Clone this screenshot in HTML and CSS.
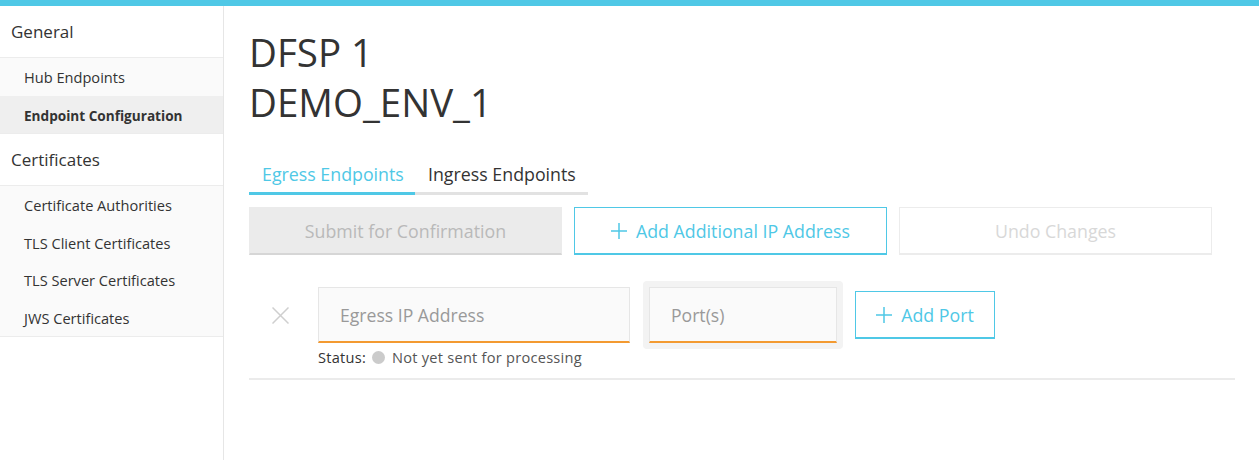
FILE: index.html
```html
<!DOCTYPE html>
<html lang="en">
<head>
<meta charset="utf-8">
<title>Endpoint Configuration</title>
<link rel="stylesheet" href="styles.css">
</head>
<body>
<div class="app">
  <aside class="sidebar">
    <div class="section-title">General</div>
    <ul class="menu">
      <li class="menu-item">Hub Endpoints</li>
      <li class="menu-item active">Endpoint Configuration</li>
    </ul>
    <div class="section-title">Certificates</div>
    <ul class="menu">
      <li class="menu-item">Certificate Authorities</li>
      <li class="menu-item">TLS Client Certificates</li>
      <li class="menu-item">TLS Server Certificates</li>
      <li class="menu-item">JWS Certificates</li>
    </ul>
  </aside>
  <main class="main">
    <h1 class="title">DFSP 1</h1>
    <h1 class="title">DEMO_ENV_1</h1>
    <div class="tabs">
      <div class="tab selected">Egress Endpoints</div>
      <div class="tab">Ingress Endpoints</div>
    </div>
    <div class="actions">
      <button class="btn btn-disabled">Submit for Confirmation</button>
      <button class="btn btn-outline"><svg class="plus" viewBox="0 0 16 16" width="16" height="16"><path d="M8 0V16M0 8H16" stroke="currentColor" stroke-width="1.5" fill="none"/></svg>Add Additional IP Address</button>
      <button class="btn btn-ghost">Undo Changes</button>
    </div>
    <div class="entry">
      <div class="entry-row">
        <div class="remove"><svg viewBox="0 0 17 17" width="17" height="17"><path d="M0.5 0.5L16.5 16.5M16.5 0.5L0.5 16.5" stroke="#cfcfcf" stroke-width="1.5" fill="none"/></svg></div>
        <div class="input ip-input">Egress IP Address</div>
        <div class="port-wrap"><div class="input port-input">Port(s)</div></div>
        <button class="btn btn-outline btn-port"><svg class="plus" viewBox="0 0 16 16" width="16" height="16"><path d="M8 0V16M0 8H16" stroke="currentColor" stroke-width="1.5" fill="none"/></svg>Add Port</button>
      </div>
      <div class="status"><span class="status-label">Status:</span><span class="dot"></span><span>Not yet sent for processing</span></div>
    </div>
  </main>
</div>
</body>
</html>
```
FILE: styles.css
```css
* { box-sizing: border-box; }
html, body { margin: 0; padding: 0; }
body {
  font-family: "Open Sans", "Noto Sans", sans-serif;
  color: #333;
  background: #fff;
  height: 460px;
  overflow: hidden;
}
.app {
  display: flex;
  border-top: 6px solid #4fc8e6;
  height: 460px;
}
.sidebar {
  width: 224px;
  flex: none;
  border-right: 1px solid #e6e6e6;
}
.section-title {
  font-size: 17px;
  height: 52px;
  line-height: 51px;
  padding-left: 11px;
  border-bottom: 1px solid #ececec;
}
.menu {
  list-style: none;
  margin: 0;
  padding: 0;
  background: #fafafa;
  border-bottom: 1px solid #ececec;
}
.menu-item {
  font-size: 14.6px;
  height: 37.5px;
  line-height: 35.5px;
  padding: 2px 0 0 24px;
}
.menu-item.active {
  background: #efefef;
  font-weight: 700;
  font-size: 13.6px;
}
.main {
  flex: 1;
  padding: 0 24px 0 25px;
}
.title {
  font-size: 38.5px;
  font-weight: 400;
  line-height: 50px;
  margin: 0;
}
.title:first-child { margin-top: 21px; }
.tabs {
  display: flex;
  margin-top: 29px;
  width: 339px;
  border-bottom: 3px solid #e2e2e2;
}
.tab {
  font-size: 17.8px;
  line-height: 24px;
  padding: 6px 0 6px 13px;
  width: 166px;
  margin-bottom: -3px;
  border-bottom: 3px solid transparent;
  white-space: nowrap;
}
.tab + .tab { width: 173px; }
.tab.selected {
  color: #4fc8e6;
  border-bottom-color: #4fc8e6;
}
.actions {
  display: flex;
  gap: 12px;
  margin-top: 12px;
}
.btn {
  font-family: inherit;
  font-size: 17.8px;
  height: 48px;
  width: 313px;
  background: #fff;
  border: 1px solid transparent;
  border-bottom-width: 2px;
  display: flex;
  align-items: center;
  justify-content: center;
  gap: 9px;
  padding: 0;
}
.btn-disabled {
  background: #ebebeb;
  color: #b9b9b9;
  border-color: #ebebeb;
  border-bottom-color: #d6d6d6;
}
.btn-outline {
  color: #4fc8e6;
  border-color: #4fc8e6;
}
.btn-ghost {
  color: #d8d8d8;
  border-color: #ececec;
}
.plus { flex: none; }
.entry {
  margin-top: 26px;
  border-bottom: 2px solid #ebebeb;
  padding-bottom: 11px;
}
.entry-row {
  display: flex;
  align-items: center;
}
.remove {
  width: 69px;
  padding-left: 23px;
  display: flex;
  align-items: center;
}
.remove svg { display: block; }
.input {
  height: 56px;
  background: #fafafa;
  border: 1px solid #e6e6e6;
  border-bottom: 2px solid #f39a31;
  color: #999;
  font-size: 17.6px;
  display: flex;
  align-items: center;
  padding-left: 21px;
}
.ip-input { width: 312px; }
.port-wrap {
  margin-left: 13px;
  background: #f3f3f3;
  border-radius: 4px;
  padding: 6px;
}
.port-input { width: 188px; }
.btn-port {
  width: 140px;
  margin-left: 12px;
}
.status {
  display: flex;
  align-items: center;
  margin-left: 69px;
  margin-top: -2px;
  font-size: 14.6px;
  letter-spacing: 0.25px;
  line-height: 20px;
  color: #555;
}
.status-label { color: #333; }
.dot {
  width: 13px;
  height: 13px;
  border-radius: 50%;
  background: #cbcbcb;
  margin: 0 7px 0 6px;
}
```
